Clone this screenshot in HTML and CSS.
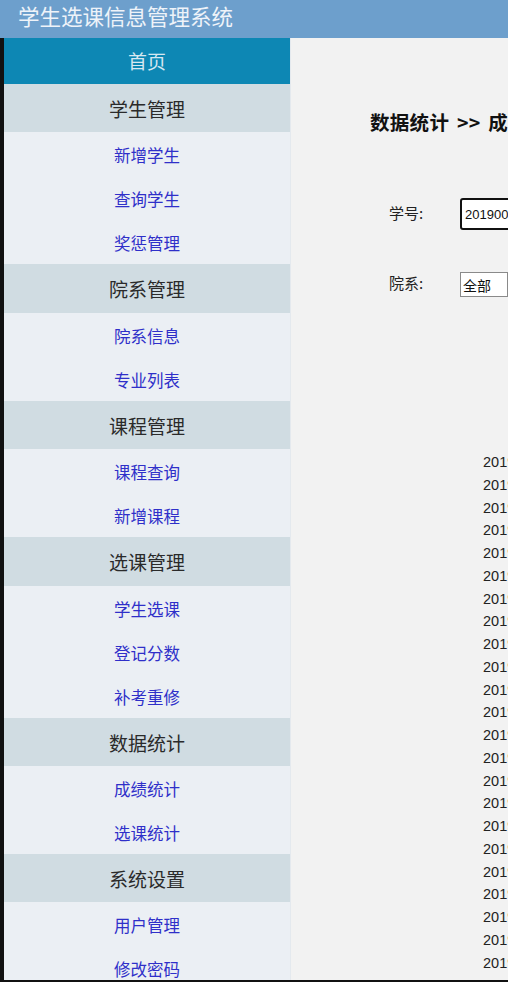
FILE: index.html
```html
<!DOCTYPE html>
<html lang="zh">
<head>
<meta charset="utf-8">
<title>学生选课信息管理系统</title>
<link rel="stylesheet" href="styles.css">
</head>
<body>
<div class="page">
  <header class="topbar">学生选课信息管理系统</header>
  <div class="frame">
    <nav class="sidebar">
      <a class="home">首页</a>
      <div class="group">学生管理</div>
      <a class="item">新增学生</a>
      <a class="item">查询学生</a>
      <a class="item">奖惩管理</a>
      <div class="group">院系管理</div>
      <a class="item">院系信息</a>
      <a class="item">专业列表</a>
      <div class="group">课程管理</div>
      <a class="item">课程查询</a>
      <a class="item">新增课程</a>
      <div class="group">选课管理</div>
      <a class="item">学生选课</a>
      <a class="item">登记分数</a>
      <a class="item">补考重修</a>
      <div class="group">数据统计</div>
      <a class="item">成绩统计</a>
      <a class="item">选课统计</a>
      <div class="group">系统设置</div>
      <a class="item">用户管理</a>
      <a class="item">修改密码</a>
    </nav>
    <main class="main">
      <h2 class="crumb">数据统计 &gt;&gt; 成绩统计</h2>
      <div class="form-row first">
        <label class="label">学号:</label>
        <input class="text-input" type="text" value="201900010001">
      </div>
      <div class="form-row">
        <label class="label">院系:</label>
        <select class="select"><option>全部</option></select>
      </div>
      <ul class="ids">
        <li>201900010001</li>
        <li>201900010002</li>
        <li>201900010003</li>
        <li>201900010004</li>
        <li>201900010005</li>
        <li>201900010006</li>
        <li>201900010007</li>
        <li>201900010008</li>
        <li>201900010009</li>
        <li>201900010010</li>
        <li>201900010011</li>
        <li>201900010012</li>
        <li>201900010013</li>
        <li>201900010014</li>
        <li>201900010015</li>
        <li>201900010016</li>
        <li>201900010017</li>
        <li>201900010018</li>
        <li>201900010019</li>
        <li>201900010020</li>
        <li>201900010021</li>
        <li>201900010022</li>
        <li>201900010023</li>
        <li>201900010024</li>
      </ul>
    </main>
  </div>
</div>
</body>
</html>
```

FILE: styles.css
```css
html, body {
  margin: 0;
  padding: 0;
}
body {
  font-family: "Liberation Sans", "Noto Sans CJK SC", sans-serif;
  background: #f2f2f2;
}
.page {
  width: 508px;
  height: 982px;
  overflow: hidden;
  display: flex;
  flex-direction: column;
  box-sizing: border-box;
  border-bottom: 2px solid #111;
}
.topbar {
  height: 38px;
  flex: none;
  background: #6d9fcc;
  color: #eef3f9;
  font-size: 21.5px;
  line-height: 32px;
  padding-left: 18px;
  font-family: "Noto Sans CJK SC", sans-serif;
}
.frame {
  flex: 1;
  display: flex;
  border-left: 4px solid #111;
  min-height: 0;
}
.sidebar {
  width: 286px;
  flex: none;
  display: flex;
  flex-direction: column;
  background: #ebeff4;
  font-family: "Noto Sans CJK SC", sans-serif;
  border-right: 1px solid #e4e9ee;
}
.home {
  height: 46px;
  flex: none;
  line-height: 46px;
  text-align: center;
  background: #0d87b4;
  color: #d6e8f1;
  font-size: 19px;
}
.group {
  height: 48.3px;
  flex: none;
  box-sizing: border-box;
  padding-top: 2px;
  line-height: 46px;
  text-align: center;
  background: #d0dce2;
  color: #2a2a2a;
  font-size: 19px;
}
.item {
  height: 44.05px;
  flex: none;
  box-sizing: border-box;
  padding-top: 2px;
  line-height: 42px;
  text-align: center;
  color: #2f2fc9;
  font-size: 16.5px;
}
.main {
  flex: 1;
  min-width: 0;
  overflow: hidden;
  background: #f2f2f2;
  padding-left: 79px;
  white-space: nowrap;
}
.crumb {
  margin: 71px 0 0;
  font-size: 19.5px;
  line-height: 26px;
  font-weight: bold;
  color: #111;
  word-spacing: 3px;
  letter-spacing: 0.3px;
  font-family: "Noto Sans CJK SC", sans-serif;
}
.form-row {
  display: flex;
  align-items: center;
  margin-top: 41px;
  padding-left: 19px;
}
.form-row.first {
  margin-top: 63px;
}
.label {
  width: 71px;
  flex: none;
  font-size: 15px;
  color: #222;
  font-family: "Noto Sans CJK SC", sans-serif;
  position: relative;
  top: -2px;
}
.text-input {
  width: 120px;
  height: 32px;
  box-sizing: border-box;
  border: 2px solid #111;
  border-radius: 3px;
  background: #fff;
  padding: 0 3px;
  font-size: 13px;
  font-family: "Liberation Sans", "Noto Sans CJK SC", sans-serif;
  color: #111;
  margin: 0;
}
.select {
  width: 120px;
  height: 25px;
  box-sizing: border-box;
  border: 1px solid #8a8a8a;
  border-radius: 0;
  background: #fff;
  font-size: 14px;
  padding: 0 2px;
  margin: 1px 0 0;
  font-family: "Noto Sans CJK SC", sans-serif;
  color: #111;
  appearance: none;
}
.ids {
  list-style: none;
  margin: 154px 0 0;
  padding: 0 0 0 113px;
}
.ids li {
  height: 22.75px;
  line-height: 22.75px;
  font-size: 14.5px;
  color: #222;
}
```
